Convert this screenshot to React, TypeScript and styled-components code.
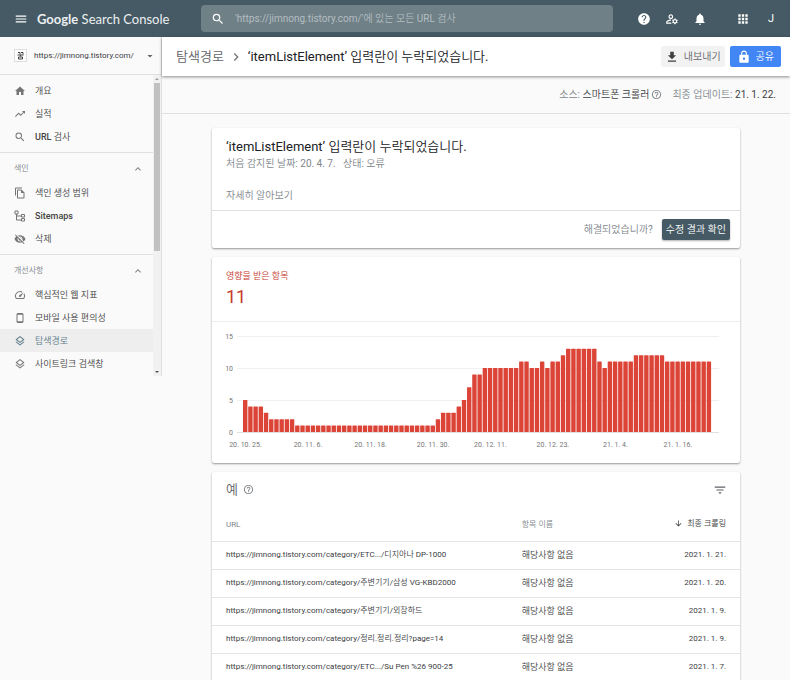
import React from "react";
import styled, { createGlobalStyle } from "styled-components";
import {
  MdApps,
  MdArrowDownward,
  MdArrowDropDown,
  MdChevronRight,
  MdExpandLess,
  MdFileDownload,
  MdFilterList,
  MdHelp,
  MdHelpOutline,
  MdHome,
  MdLock,
  MdMenu,
  MdNotifications,
  MdOutlineFileCopy,
  MdOutlineLayers,
  MdOutlineManageAccounts,
  MdSearch,
  MdSpeed,
  MdTrendingUp,
  MdVisibilityOff,
} from "react-icons/md";

const GlobalStyle = createGlobalStyle`
  *, *::before, *::after { box-sizing: border-box; }
  body {
    margin: 0;
    background: #fafafa;
    color: #3c4043;
    font-family: Roboto, "Noto Sans CJK KR DemiLight", "Noto Sans CJK KR Light", "Noto Sans CJK KR", sans-serif;
    font-size: 9px;
    line-height: 14px;
  }
  button, input, select { font: inherit; color: inherit; }
  button { border: 0; padding: 0; background: none; cursor: pointer; }
  a { color: inherit; text-decoration: none; }
  h1, h2, p, ul { margin: 0; padding: 0; font-weight: 400; }
  ul { list-style: none; }
  svg { display: block; flex: none; }
`;

const Page = styled.div`
  height: 100vh;
  overflow: hidden;
  display: flex;
  flex-direction: column;
`;

const TopBar = styled.header`
  flex: none;
  height: 37px;
  display: flex;
  align-items: center;
  background: #455a64;
  color: #fff;
`;

const Brand = styled.div`
  width: 201px;
  display: flex;
  align-items: center;
  gap: 9px;
  padding-left: 14px;
`;

const Logo = styled.a`
  font-family: Lato, sans-serif;
  font-size: 13px;
  line-height: 20px;
  white-space: nowrap;
  color: #eceff1;
`;

const LogoStrong = styled.span`
  font-weight: 700;
`;

const SearchBox = styled.label`
  flex: 1;
  height: 27px;
  display: flex;
  align-items: center;
  gap: 10px;
  padding: 0 10px;
  border-radius: 4px;
  background: #6f8087;
`;

const SearchInput = styled.input`
  flex: 1;
  min-width: 0;
  border: 0;
  outline: 0;
  padding: 0;
  background: none;
  font-size: 10px;
  line-height: 16px;
  &::placeholder { color: #b4bec2; opacity: 1; }
`;

const Tools = styled.div`
  width: 177px;
  display: flex;
  align-items: center;
  gap: 14px;
  padding-left: 24px;
`;

const IconButton = styled.button`
  width: 14px;
  height: 14px;
  display: flex;
  align-items: center;
  justify-content: center;
  color: inherit;
`;

const AppsButton = styled(IconButton)`
  margin-left: 15px;
`;

const Account = styled(IconButton)`
  font-size: 11px;
`;

const Body = styled.div`
  flex: 1;
  min-height: 0;
  display: flex;
  align-items: flex-start;
`;

const Sidebar = styled.aside`
  flex: none;
  width: 162px;
  border-right: 1px solid #e0e0e0;
`;

const Property = styled.label`
  height: 38px;
  display: flex;
  align-items: center;
  padding: 0 5px 0 14px;
  border-bottom: 1px solid #e0e0e0;
`;

const Favicon = styled.span`
  width: 13px;
  height: 13px;
  display: flex;
  align-items: center;
  justify-content: center;
  border: 1px solid #dadce0;
  background: #fff;
`;

const PropertySelect = styled.select`
  flex: 1;
  min-width: 0;
  margin-left: 7px;
  padding: 0;
  border: 0;
  outline: 0;
  appearance: none;
  background: none;
  font-size: 8px;
`;

const Caret = styled(MdArrowDropDown)`
  color: #616161;
`;

const NavArea = styled.div`
  display: flex;
`;

const Nav = styled.nav`
  flex: 1;
`;

const Group = styled.section`
  padding: 4px 0;
  & + & { border-top: 1px solid #e0e0e0; }
  &:last-child { padding-bottom: 1px; }
`;

const GroupToggle = styled.button`
  width: 100%;
  height: 24px;
  display: flex;
  align-items: center;
  justify-content: space-between;
  padding: 0 9px 0 14px;
  color: #80868b;
  font-size: 8px;
`;

const NavLink = styled.a<{ $active?: boolean; $strong?: boolean }>`
  height: 23px;
  display: flex;
  align-items: center;
  gap: 9px;
  padding-left: 14px;
  font-weight: ${(p) => (p.$strong ? 500 : 400)};
  color: ${(p) => (p.$active ? "#607d8b" : "#424242")};
  background: ${(p) => (p.$active ? "#eeeeee" : "none")};
  svg { color: ${(p) => (p.$active ? "#607d8b" : "#757575")}; }
`;

const Scrollbar = styled.div`
  width: 8px;
  display: flex;
  flex-direction: column;
  align-items: center;
  justify-content: space-between;
  background: #f1f1f1;
`;

const ScrollTrack = styled.div`
  flex: 1;
  width: 6px;
`;

const ScrollThumb = styled.div`
  height: 59%;
  background: #c1c1c1;
`;

const Main = styled.main`
  flex: 1;
  min-width: 0;
`;

const Breadcrumb = styled.div`
  position: relative;
  height: 39px;
  display: flex;
  align-items: center;
  padding: 0 9px 0 14px;
  background: #fff;
  box-shadow: 0 1px 3px rgba(0, 0, 0, 0.45);
  font-size: 13px;
  line-height: 20px;
  color: #202124;
  white-space: nowrap;
`;

const Crumb = styled.a`
  color: #5f6368;
`;

const CrumbSeparator = styled(MdChevronRight)`
  margin: 0 4px;
  color: #757575;
`;

const Actions = styled.div`
  margin-left: auto;
  display: flex;
  gap: 5px;
`;

const ActionButton = styled.button<{ $primary?: boolean }>`
  height: 21px;
  display: flex;
  align-items: center;
  gap: 5px;
  padding: 0 ${(p) => (p.$primary ? 7 : 4)}px;
  border-radius: 2px;
  font-size: 10px;
  line-height: 16px;
  color: ${(p) => (p.$primary ? "#fff" : "#5f6368")};
  background: ${(p) => (p.$primary ? "#4285f4" : "#f2f2f2")};
  svg { color: ${(p) => (p.$primary ? "#fff" : "#3c4043")}; }
`;

const SourceBar = styled.div`
  height: 38px;
  display: flex;
  align-items: center;
  justify-content: flex-end;
  gap: 10px;
  padding: 0 14px;
  border-bottom: 1px solid #e0e0e0;
  font-size: 10px;
  line-height: 16px;
  color: #80868b;
`;

const SourceItem = styled.span`
  display: flex;
  align-items: center;
  gap: 2px;
`;

const Dark = styled.span`
  color: #3c4043;
`;

const HelpMark = styled(MdHelpOutline)`
  color: #80868b;
`;

const Cards = styled.div`
  display: flex;
  flex-direction: column;
  gap: 9px;
  padding: 14px 50px;
`;

const Card = styled.section`
  border-radius: 2px;
  background: #fff;
  box-shadow: 0 1px 2px rgba(0, 0, 0, 0.4);
`;

const IssueBody = styled.div`
  padding: 10px 14px 6px;
  font-size: 10px;
  line-height: 16px;
  color: #80868b;
`;

const IssueTitle = styled.h1`
  font-size: 13px;
  line-height: 18px;
  color: #202124;
`;

const Learn = styled.a`
  display: block;
  margin-top: 16px;
`;

const IssueFooter = styled.div`
  height: 38px;
  display: flex;
  align-items: center;
  justify-content: flex-end;
  gap: 9px;
  padding: 0 10px;
  border-top: 1px solid #e0e0e0;
  font-size: 10px;
  line-height: 16px;
  color: #80868b;
`;

const VerifyButton = styled.button`
  height: 21px;
  padding: 0 4px;
  border-radius: 2px;
  background: #455a64;
  color: #fff;
  box-shadow: 0 1px 2px rgba(0, 0, 0, 0.3);
`;

const Summary = styled.div`
  height: 65px;
  padding: 12px 14px 0;
  border-bottom: 1px solid #eeeeee;
  color: #c5392c;
`;

const Count = styled.p`
  margin-top: 4px;
  font-size: 18px;
  line-height: 20px;
`;

const Chart = styled.svg`
  width: 100%;
  height: auto;
  text {
    font-size: 7px;
    fill: #757575;
  }
`;

const ExamplesHead = styled.div`
  height: 35px;
  display: flex;
  align-items: center;
  gap: 5px;
  padding: 0 13px 0 14px;
  color: #5f6368;
  button { margin-left: auto; }
`;

const ExamplesTitle = styled.h2`
  font-size: 13px;
  line-height: 20px;
`;

const Table = styled.table`
  width: 100%;
  border-collapse: collapse;
  table-layout: fixed;
  white-space: nowrap;
`;

const HeadCell = styled.th<{ $width?: string; $sorted?: boolean }>`
  width: ${(p) => p.$width ?? "auto"};
  height: 34px;
  padding: 2px 14px 0;
  text-align: ${(p) => (p.$sorted ? "right" : "left")};
  font-size: 8px;
  font-weight: 400;
  color: ${(p) => (p.$sorted ? "#3c4043" : "#80868b")};
`;

const SortButton = styled.button`
  display: inline-flex;
  align-items: center;
  gap: 4px;
`;

const Cell = styled.td<{ $end?: boolean; $small?: boolean }>`
  height: 28px;
  padding: 0 14px;
  border-top: 1px solid #e4e4e4;
  font-size: ${(p) => (p.$small ? 8 : 9)}px;
  text-align: ${(p) => (p.$end ? "right" : "left")};
`;

function SitemapIcon() {
  return (
    <svg width="12" height="12" viewBox="0 0 24 24" fill="none" stroke="currentColor" strokeWidth="2">
      <path d="M2 2h6v6H2zM15 9h6v5h-6zM15 17h6v5h-6zM5 8v12h10M5 12h10" />
    </svg>
  );
}

function PhoneIcon() {
  return (
    <svg width="12" height="12" viewBox="0 0 24 24" fill="none" stroke="currentColor">
      <rect x="6" y="3" width="12" height="18" rx="1.500" strokeWidth="2" />
      <path d="M6 4h12M6 20h12" strokeWidth="3" />
    </svg>
  );
}

function FaviconMark() {
  return (
    <svg width="7" height="9" viewBox="0 0 14 18" fill="none" stroke="#424242" strokeWidth="2">
      <path d="M2 3h4v4M8 3h4v4M1 8h12M7 8v3M3 12h8v4H3z" />
    </svg>
  );
}

const overviewLinks = [
  { label: "개요", icon: <MdHome size={12} /> },
  { label: "실적", icon: <MdTrendingUp size={12} /> },
  { label: "URL 검사", icon: <MdSearch size={12} />, strong: true },
];

const groups = [
  {
    title: "색인",
    links: [
      { label: "색인 생성 범위", icon: <MdOutlineFileCopy size={12} /> },
      { label: "Sitemaps", icon: <SitemapIcon />, strong: true },
      { label: "삭제", icon: <MdVisibilityOff size={12} /> },
    ],
  },
  {
    title: "개선사항",
    links: [
      { label: "핵심적인 웹 지표", icon: <MdSpeed size={12} /> },
      { label: "모바일 사용 편의성", icon: <PhoneIcon /> },
      { label: "탐색경로", icon: <MdOutlineLayers size={12} />, active: true },
      { label: "사이트링크 검색창", icon: <MdOutlineLayers size={12} /> },
    ],
  },
];

type LinkData = { label: string; icon: React.ReactNode; active?: boolean; strong?: boolean };

function NavList({ links }: { links: LinkData[] }) {
  return (
    <ul>
      {links.map((link) => (
        <li key={link.label}>
          <NavLink href="#" $active={link.active} $strong={link.strong}>
            {link.icon}
            {link.label}
          </NavLink>
        </li>
      ))}
    </ul>
  );
}

const repeat = (value: number, times: number): number[] => Array(times).fill(value);

const daily = [
  5, 4, 4, 4, 3, ...repeat(2, 5), ...repeat(1, 27), 2, 3, 3, 3, 4, 5, 7, 9, 9,
  ...repeat(10, 7), 11, 11, 10, 10, 11, 10, 11, 11, 12, ...repeat(13, 6), 11, 10,
  ...repeat(11, 5), ...repeat(12, 6), ...repeat(11, 9),
];

const dateTicks: [number, string][] = [
  [0, "20. 10. 25."],
  [12, "20. 11. 6."],
  [24, "20. 11. 18."],
  [36, "20. 11. 30."],
  [47, "20. 12. 11."],
  [59, "20. 12. 23."],
  [71, "21. 1. 4."],
  [83, "21. 1. 16."],
];

const plot = { left: 31, bottom: 110, unit: 6.4, pitch: 5.21, bar: 4.4 };

function AffectedItemsChart() {
  return (
    <Chart viewBox="0 0 528 141" role="img" aria-label="영향을 받은 항목">
      {[0, 5, 10, 15].map((value) => {
        const y = plot.bottom - value * plot.unit;
        return (
          <g key={value}>
            <rect x="25" y={y} width="482" height="1" fill={value ? "#f0f0f0" : "#e0e0e0"} />
            <text x="21" y={y + 3} textAnchor="end">{value}</text>
          </g>
        );
      })}
      {daily.map((value, i) => (
        <rect
          key={i}
          x={plot.left + i * plot.pitch}
          y={plot.bottom - value * plot.unit}
          width={plot.bar}
          height={value * plot.unit}
          rx="0.5"
          fill="#db4437"
        />
      ))}
      {dateTicks.map(([index, label]) => (
        <text key={label} x={plot.left + 2.5 + index * plot.pitch} y="125" textAnchor="middle">
          {label}
        </text>
      ))}
    </Chart>
  );
}

const examples = [
  ["https://jimnong.tistory.com/category/ETC.../디지아나 DP-1000", "2021. 1. 21."],
  ["https://jimnong.tistory.com/category/주변기기/삼성 VG-KBD2000", "2021. 1. 20."],
  ["https://jimnong.tistory.com/category/주변기기/외장하드", "2021. 1. 9."],
  ["https://jimnong.tistory.com/category/정리.정리.정리?page=14", "2021. 1. 9."],
  ["https://jimnong.tistory.com/category/ETC.../Su Pen %26 900-25", "2021. 1. 7."],
];

export default function App() {
  return (
    <>
      <GlobalStyle />
      <Page>
        <TopBar>
          <Brand>
            <IconButton aria-label="메뉴"><MdMenu size={14} /></IconButton>
            <Logo href="#"><LogoStrong>Google</LogoStrong> Search Console</Logo>
          </Brand>
          <SearchBox>
            <MdSearch size={14} />
            <SearchInput
              aria-label="URL 검사"
              placeholder="'https://jimnong.tistory.com/'에 있는 모든 URL 검사"
            />
          </SearchBox>
          <Tools>
            <IconButton aria-label="도움말"><MdHelp size={14} /></IconButton>
            <IconButton aria-label="사용자 설정"><MdOutlineManageAccounts size={14} /></IconButton>
            <IconButton aria-label="알림"><MdNotifications size={14} /></IconButton>
            <AppsButton aria-label="앱"><MdApps size={14} /></AppsButton>
            <Account aria-label="계정">J</Account>
          </Tools>
        </TopBar>
        <Body>
          <Sidebar>
            <Property>
              <Favicon><FaviconMark /></Favicon>
              <PropertySelect aria-label="속성">
                <option>https://jimnong.tistory.com/</option>
              </PropertySelect>
              <Caret size={12} />
            </Property>
            <NavArea>
              <Nav>
                <Group><NavList links={overviewLinks} /></Group>
                {groups.map((group) => (
                  <Group key={group.title}>
                    <GroupToggle aria-expanded="true">
                      {group.title}
                      <MdExpandLess size={12} />
                    </GroupToggle>
                    <NavList links={group.links} />
                  </Group>
                ))}
              </Nav>
              <Scrollbar aria-hidden="true">
                <svg width="8" height="8" viewBox="0 0 8 8" fill="#9e9e9e"><path d="M4 3l2 2H2z" /></svg>
                <ScrollTrack><ScrollThumb /></ScrollTrack>
                <svg width="8" height="8" viewBox="0 0 8 8" fill="#505050"><path d="M4 5L2 3h4z" /></svg>
              </Scrollbar>
            </NavArea>
          </Sidebar>
          <Main>
            <Breadcrumb>
              <Crumb href="#">탐색경로</Crumb>
              <CrumbSeparator size={16} />
              <span>‘itemListElement’ 입력란이 누락되었습니다.</span>
              <Actions>
                <ActionButton><MdFileDownload size={14} />내보내기</ActionButton>
                <ActionButton $primary><MdLock size={14} />공유</ActionButton>
              </Actions>
            </Breadcrumb>
            <SourceBar>
              <SourceItem>
                <span>소스: <Dark>스마트폰 크롤러</Dark></span>
                <HelpMark size={11} />
              </SourceItem>
              <span>최종 업데이트: <Dark>21. 1. 22.</Dark></span>
            </SourceBar>
            <Cards>
              <Card>
                <IssueBody>
                  <IssueTitle>‘itemListElement’ 입력란이 누락되었습니다.</IssueTitle>
                  <p>처음 감지된 날짜: 20. 4. 7. &nbsp; 상태: 오류</p>
                  <Learn href="#">자세히 알아보기</Learn>
                </IssueBody>
                <IssueFooter>
                  <span>해결되었습니까?</span>
                  <VerifyButton>수정 결과 확인</VerifyButton>
                </IssueFooter>
              </Card>
              <Card>
                <Summary>
                  <p>영향을 받은 항목</p>
                  <Count>11</Count>
                </Summary>
                <AffectedItemsChart />
              </Card>
              <Card>
                <ExamplesHead>
                  <ExamplesTitle>예</ExamplesTitle>
                  <HelpMark size={11} />
                  <IconButton aria-label="필터"><MdFilterList size={14} /></IconButton>
                </ExamplesHead>
                <Table>
                  <thead>
                    <tr>
                      <HeadCell $width="56%">URL</HeadCell>
                      <HeadCell>항목 이름</HeadCell>
                      <HeadCell $sorted>
                        <SortButton><MdArrowDownward size={9} />최종 크롤링</SortButton>
                      </HeadCell>
                    </tr>
                  </thead>
                  <tbody>
                    {examples.map(([url, crawled]) => (
                      <tr key={url}>
                        <Cell $small>{url}</Cell>
                        <Cell>해당사항 없음</Cell>
                        <Cell $small $end>{crawled}</Cell>
                      </tr>
                    ))}
                  </tbody>
                </Table>
              </Card>
            </Cards>
          </Main>
        </Body>
      </Page>
    </>
  );
}
